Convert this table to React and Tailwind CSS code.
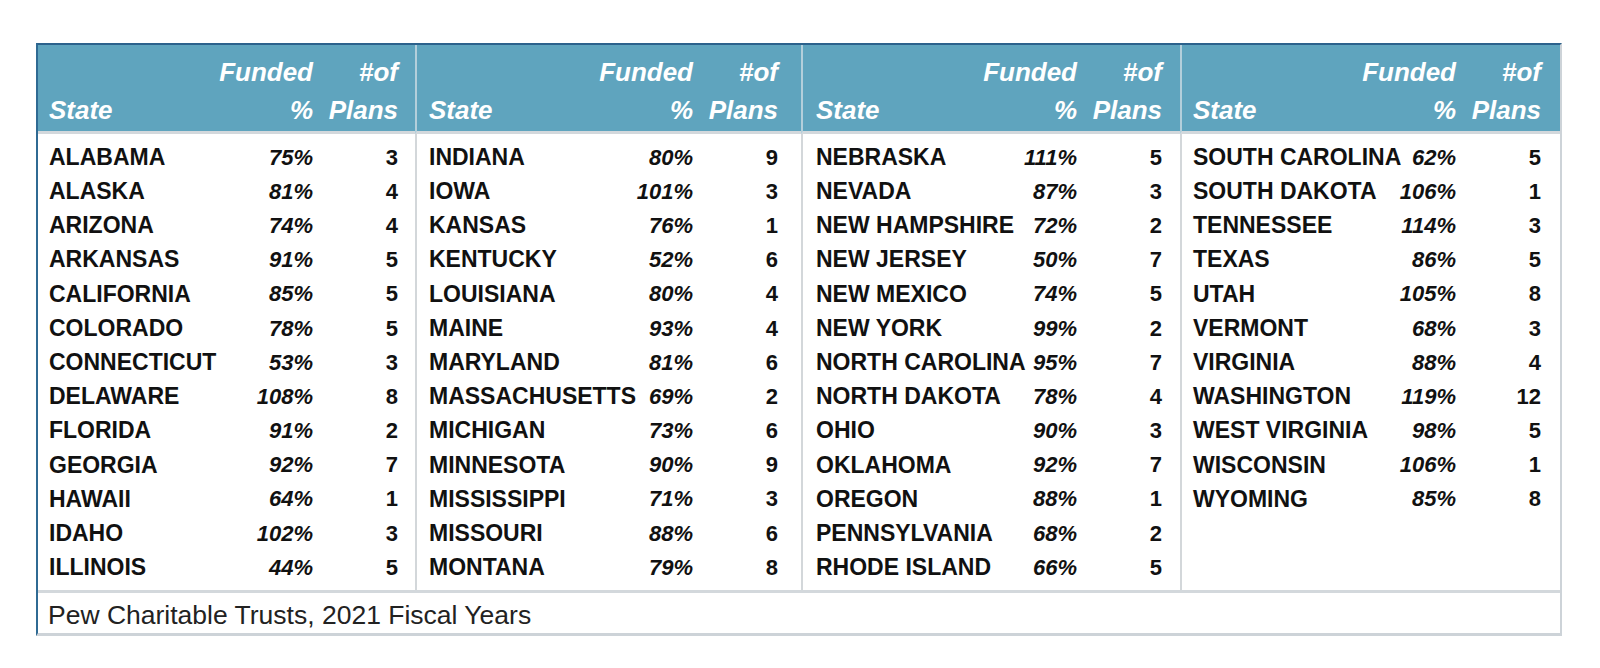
const columns = [
  {
    width: 'pl-[11px] pr-[17px]',
    rows: [
      ['ALABAMA', '75%', 3],
      ['ALASKA', '81%', 4],
      ['ARIZONA', '74%', 4],
      ['ARKANSAS', '91%', 5],
      ['CALIFORNIA', '85%', 5],
      ['COLORADO', '78%', 5],
      ['CONNECTICUT', '53%', 3],
      ['DELAWARE', '108%', 8],
      ['FLORIDA', '91%', 2],
      ['GEORGIA', '92%', 7],
      ['HAWAII', '64%', 1],
      ['IDAHO', '102%', 3],
      ['ILLINOIS', '44%', 5],
    ],
  },
  {
    width: 'pl-[12px] pr-[23px]',
    rows: [
      ['INDIANA', '80%', 9],
      ['IOWA', '101%', 3],
      ['KANSAS', '76%', 1],
      ['KENTUCKY', '52%', 6],
      ['LOUISIANA', '80%', 4],
      ['MAINE', '93%', 4],
      ['MARYLAND', '81%', 6],
      ['MASSACHUSETTS', '69%', 2],
      ['MICHIGAN', '73%', 6],
      ['MINNESOTA', '90%', 9],
      ['MISSISSIPPI', '71%', 3],
      ['MISSOURI', '88%', 6],
      ['MONTANA', '79%', 8],
    ],
  },
  {
    width: 'pl-[13px] pr-[18px]',
    rows: [
      ['NEBRASKA', '111%', 5],
      ['NEVADA', '87%', 3],
      ['NEW HAMPSHIRE', '72%', 2],
      ['NEW JERSEY', '50%', 7],
      ['NEW MEXICO', '74%', 5],
      ['NEW YORK', '99%', 2],
      ['NORTH CAROLINA', '95%', 7],
      ['NORTH DAKOTA', '78%', 4],
      ['OHIO', '90%', 3],
      ['OKLAHOMA', '92%', 7],
      ['OREGON', '88%', 1],
      ['PENNSYLVANIA', '68%', 2],
      ['RHODE ISLAND', '66%', 5],
    ],
  },
  {
    width: 'pl-[11px] pr-[19px]',
    rows: [
      ['SOUTH CAROLINA', '62%', 5],
      ['SOUTH DAKOTA', '106%', 1],
      ['TENNESSEE', '114%', 3],
      ['TEXAS', '86%', 5],
      ['UTAH', '105%', 8],
      ['VERMONT', '68%', 3],
      ['VIRGINIA', '88%', 4],
      ['WASHINGTON', '119%', 12],
      ['WEST VIRGINIA', '98%', 5],
      ['WISCONSIN', '106%', 1],
      ['WYOMING', '85%', 8],
    ],
  },
];

const StateColumn = ({ column, first }) => (
  <div className="flex flex-col">
    {/* Header */}
    <div
      className={`bg-[#5fa4be] border-b-[3px] border-b-[#d3d8dc] pt-[8px] pb-[2px] ${column.width} ${
        first ? '' : 'border-l-2 border-l-[#b3cfdb]'
      }`}
    >
      <div className="flex items-end text-white font-bold italic text-[26px] leading-[38px]">
        <div className="flex-1">State</div>
        <div className="text-right">
          <div>Funded</div>
          <div>%</div>
        </div>
        <div className="w-[85px] shrink-0 text-right">
          <div>#of</div>
          <div>Plans</div>
        </div>
      </div>
    </div>

    {/* Body */}
    <div
      className={`flex-1 py-[6px] ${column.width} ${first ? '' : 'border-l-2 border-l-[#d3d7da]'}`}
    >
      {column.rows.map(([state, funded, plans]) => (
        <div key={state} className="flex items-center h-[34.2px] font-bold text-[#111]">
          <div className="flex-1 min-w-0 whitespace-nowrap text-[23px]">{state}</div>
          <div className="shrink-0 text-right italic text-[22px]">{funded}</div>
          <div className="w-[85px] shrink-0 text-right text-[22px]">{plans}</div>
        </div>
      ))}
    </div>
  </div>
);

const App = () => {
  return (
    <div className="min-h-screen bg-white pt-[43px] pl-[36px] font-['Liberation_Sans',Arial,sans-serif]">
      <div className="w-[1526px] border-l-2 border-l-[#2f6a93] border-t-2 border-t-[#2c628c] border-r-2 border-r-[#cdd3d8] border-b-[3px] border-b-[#cdd3d8]">
        <div className="grid grid-cols-[377px_386px_379px_380px]">
          {columns.map((column, i) => (
            <StateColumn key={i} column={column} first={i === 0} />
          ))}
        </div>

        {/* Footer */}
        <div className="border-t-[3px] border-t-[#d3d8dc] h-[43px] pt-[2px] pl-[10px] text-[26.5px] leading-[41px] text-[#222]">
          Pew Charitable Trusts, 2021 Fiscal Years
        </div>
      </div>
    </div>
  );
};

export default App;
